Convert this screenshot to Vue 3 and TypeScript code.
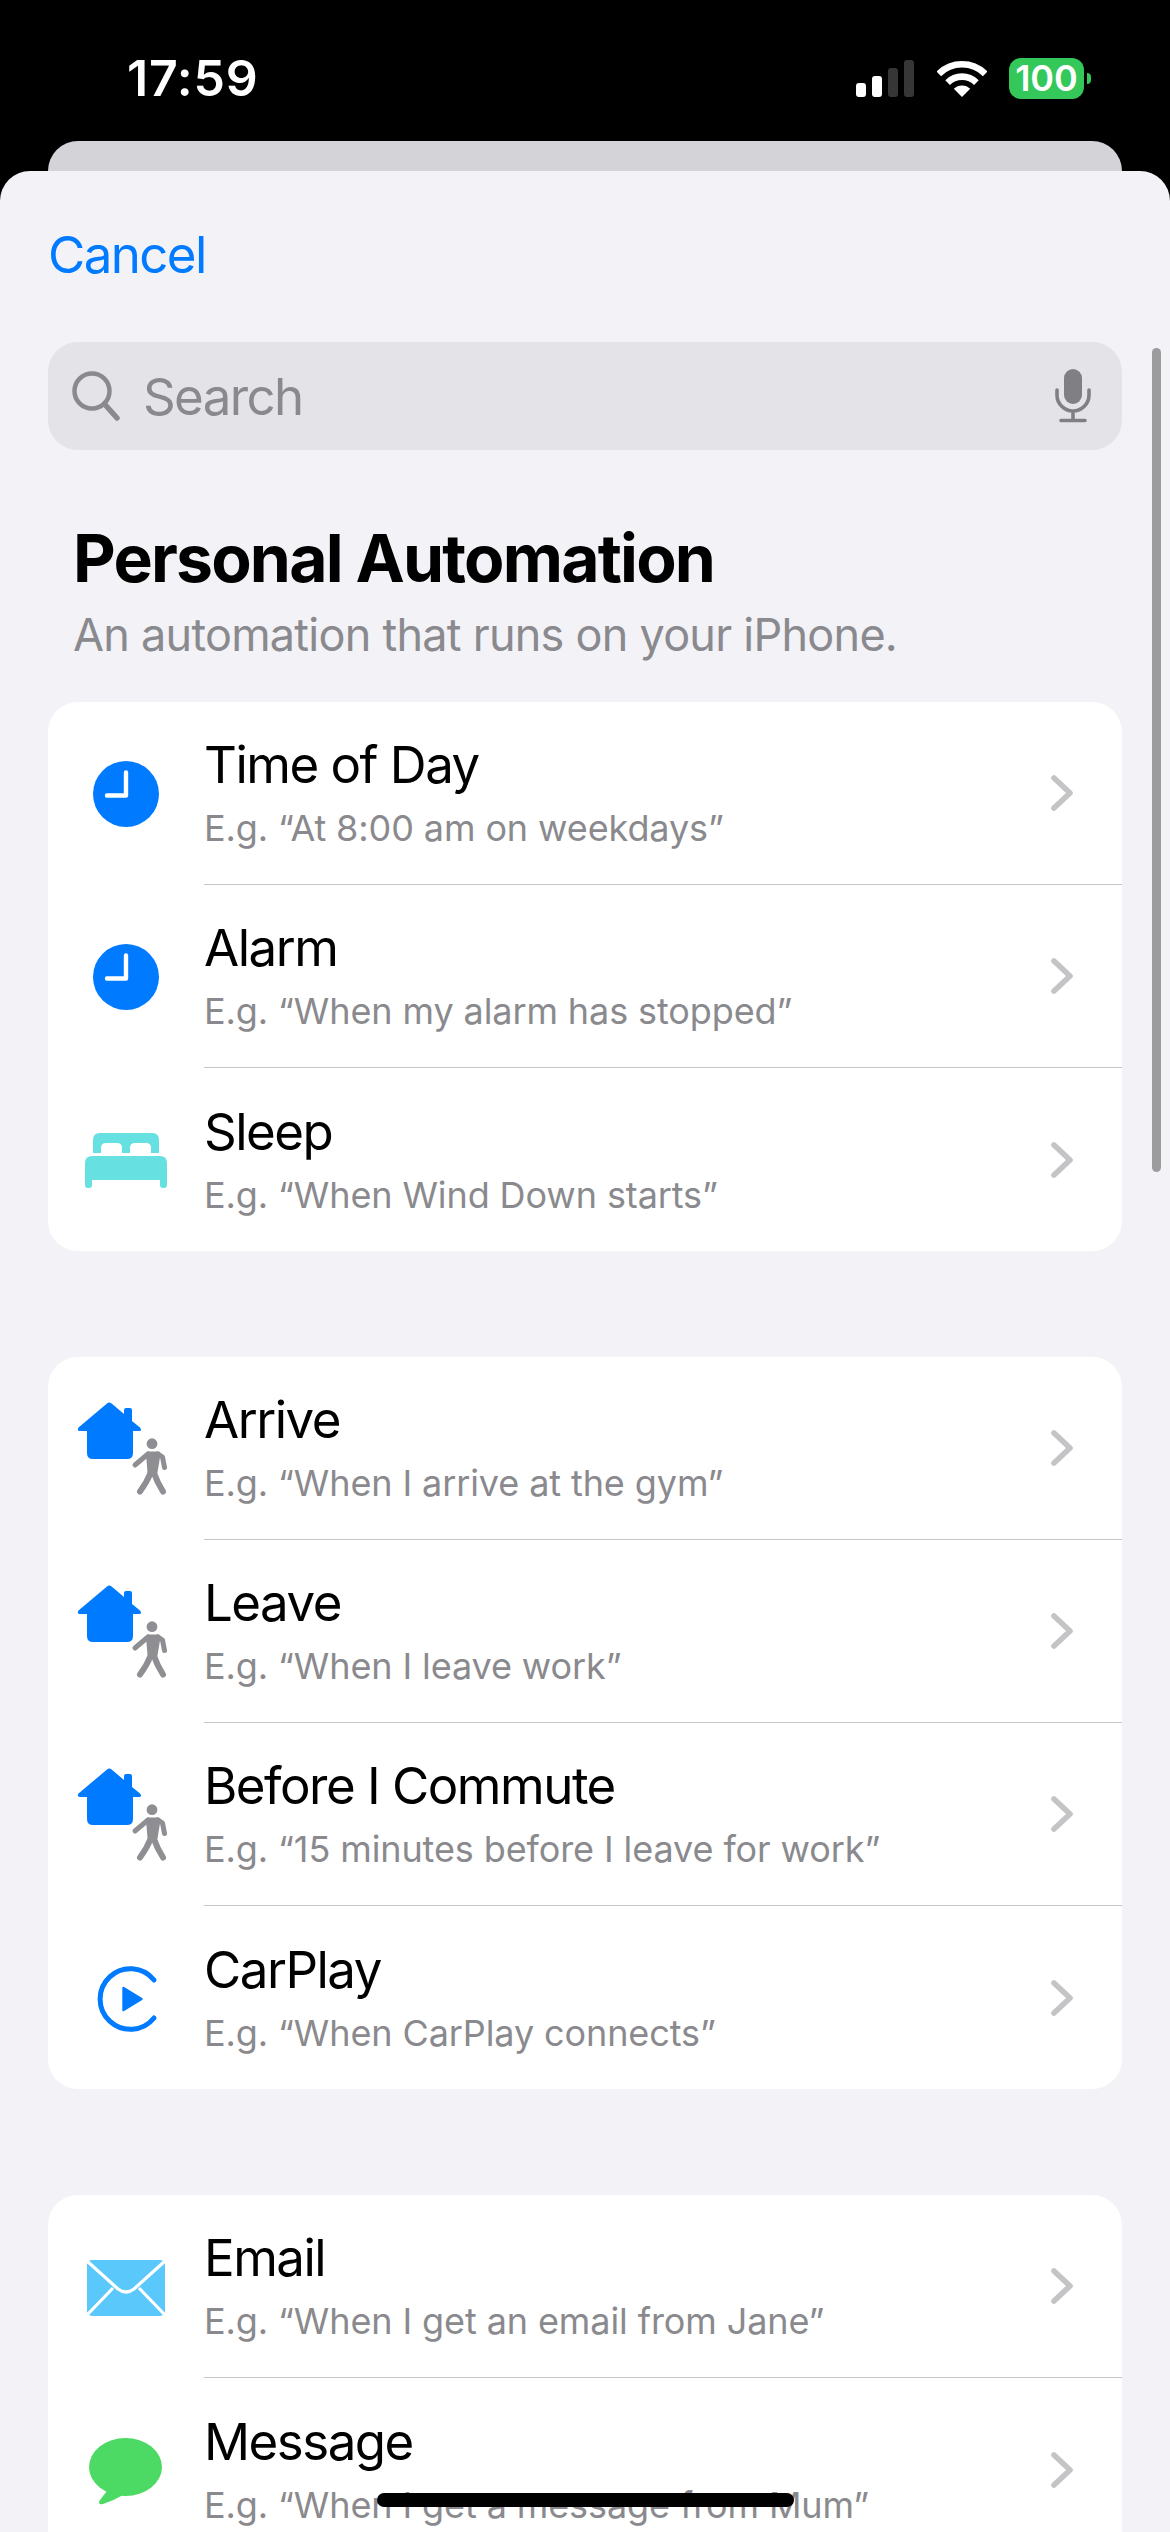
<template>
  <div class="page">
    <div class="status">
      <span class="time">17:59</span>
      <div class="status-icons">
        <svg class="signal" width="58" height="37" viewBox="0 0 58 37">
          <rect x="0" y="23" width="10" height="14" rx="3" fill="#fff" />
          <rect x="16" y="16" width="10" height="21" rx="3" fill="#fff" />
          <rect x="32" y="8" width="10" height="29" rx="3" fill="#363636" />
          <rect x="48" y="0" width="10" height="37" rx="3" fill="#363636" />
        </svg>
        <svg class="wifi" width="50" height="37" viewBox="0 0 50 37">
          <path d="M1.8 13.8A33 33 0 0 1 48.2 13.8" fill="none" stroke="#fff" stroke-width="6.6" />
          <path d="M10.6 22.6A20.4 20.4 0 0 1 39.4 22.6" fill="none" stroke="#fff" stroke-width="6.6" />
          <path d="M25 37L16.8 28.8A11.6 11.6 0 0 1 33.2 28.8Z" fill="#fff" />
        </svg>
        <div class="battery"><span>100</span></div>
        <div class="battery-nub"></div>
      </div>
    </div>
    <div class="back-card"></div>

    <div class="sheet">
      <div class="cancel">Cancel</div>

      <div class="search">
        <svg width="48" height="50" viewBox="0 0 48 50">
          <circle cx="20" cy="20" r="17.5" fill="none" stroke="#8a8a8e" stroke-width="4.5" />
          <path d="M32.5 33L45 47" fill="none" stroke="#8a8a8e" stroke-width="5.5" stroke-linecap="round" />
        </svg>
        <span class="search-text">Search</span>
        <svg class="mic" width="36" height="54" viewBox="0 0 36 54">
          <rect x="9" y="0" width="18" height="35" rx="9" fill="#7f7f84" />
          <path d="M2 21V26A16 16 0 0 0 34 26V21M18 42V51M6 51.5H30" fill="none" stroke="#7f7f84" stroke-width="3.6" stroke-linecap="round" />
        </svg>
      </div>

      <h1 class="title">Personal Automation</h1>
      <p class="subtitle">An automation that runs on your iPhone.</p>

      <div v-for="(group, g) in groups" :key="g" class="card">
        <div v-for="row in group" :key="row.title" class="row">
          <svg class="row-icon" width="156" height="182" viewBox="0 0 156 182">
            <g v-if="row.icon === 'clock'">
              <circle cx="78" cy="92" r="33" fill="#007aff" />
              <path d="M78 70.5V93.5H59" fill="none" stroke="#fff" stroke-width="4.4" stroke-linecap="round" stroke-linejoin="round" />
            </g>
            <g v-else-if="row.icon === 'bed'">
              <path fill-rule="evenodd" d="M52 65H104Q111 65 111 72V85H103V80Q103 75 98 75H87Q82 75 82 80V85H74V80Q74 75 69 75H58Q53 75 53 80V85H45V72Q45 65 52 65Z" fill="#66e0e0" />
              <path d="M44 88H112Q119 88 119 95V117Q119 120 116 120H115Q112 120 112 117V112H44V117Q44 120 41 120H40Q37 120 37 117V95Q37 88 44 88Z" fill="#66e0e0" />
            </g>
            <g v-else-if="row.icon === 'place'">
              <path d="M30.5 70.5L59 46.5Q61.3 44.6 63.6 46.5L76 57V53Q76 51 78 51H82Q84 51 84 53V64L92 70.5Q94.5 74 91 74H85V96Q85 102 79 102H45Q39 102 39 96V74H32Q28.5 74 30.5 70.5Z" fill="#007aff" />
              <g fill="none" stroke="#8e8e93" stroke-linecap="round" stroke-linejoin="round">
                <circle cx="104" cy="86.7" r="5.4" fill="#8e8e93" stroke="none" />
                <path d="M100.5 97H110L107 115H102Z" fill="#8e8e93" stroke-width="5" />
                <path d="M100 97L87 108M110 97L114.5 100L116.5 110.5" stroke-width="5" />
                <path d="M102.5 116Q99 125 92 134.5M106 116Q109 125 115 134.5" stroke-width="6" />
              </g>
            </g>
            <g v-else-if="row.icon === 'carplay'">
              <path d="M106 74A30.3 30.3 0 1 0 106 112" fill="none" stroke="#007aff" stroke-width="5" stroke-linecap="round" />
              <path d="M75.5 82L93.5 93L75.5 104Z" fill="#007aff" stroke="#007aff" stroke-width="2.4" stroke-linejoin="round" />
            </g>
            <g v-else-if="row.icon === 'mail'">
              <rect x="39" y="65" width="78" height="56" rx="5" fill="#5ac8fa" />
              <path d="M39 66L70 94Q78 100 86 94L117 66M39 120L65 93M117 120L91 93" fill="none" stroke="#fff" stroke-width="3.2" />
            </g>
            <g v-else>
              <ellipse cx="77.5" cy="89" rx="36.5" ry="29" fill="#4cd964" />
              <path d="M59 113L52 122Q49 127 55 126Q65 123 75 117Z" fill="#4cd964" />
            </g>
          </svg>
          <div class="row-body">
            <div class="row-text">
              <div class="row-title">{{ row.title }}</div>
              <div class="row-sub">{{ row.sub }}</div>
            </div>
            <svg class="chevron" width="22" height="36" viewBox="0 0 22 36">
              <path d="M3 3L19 18L3 33" fill="none" stroke="#c4c4c7" stroke-width="5.6" stroke-linecap="round" stroke-linejoin="round" />
            </svg>
          </div>
        </div>
      </div>
    </div>

    <div class="scrollbar"></div>
    <div class="home-indicator"></div>
  </div>
</template>

<script setup lang="ts">
interface Row {
  icon: string
  title: string
  sub: string
}

const groups: Row[][] = [
  [
    { icon: 'clock', title: 'Time of Day', sub: 'E.g. “At 8:00 am on weekdays”' },
    { icon: 'clock', title: 'Alarm', sub: 'E.g. “When my alarm has stopped”' },
    { icon: 'bed', title: 'Sleep', sub: 'E.g. “When Wind Down starts”' }
  ],
  [
    { icon: 'place', title: 'Arrive', sub: 'E.g. “When I arrive at the gym”' },
    { icon: 'place', title: 'Leave', sub: 'E.g. “When I leave work”' },
    { icon: 'place', title: 'Before I Commute', sub: 'E.g. “15 minutes before I leave for work”' },
    { icon: 'carplay', title: 'CarPlay', sub: 'E.g. “When CarPlay connects”' }
  ],
  [
    { icon: 'mail', title: 'Email', sub: 'E.g. “When I get an email from Jane”' },
    { icon: 'message', title: 'Message', sub: 'E.g. “When I get a message from Mum”' }
  ]
]
</script>

<style>
html,
body {
  margin: 0;
  background: #000;
}
</style>

<style scoped>
.page {
  position: relative;
  width: 1170px;
  height: 2532px;
  overflow: hidden;
  background: #000;
  font-family: Inter, "Liberation Sans", sans-serif;
}

.status {
  display: flex;
  justify-content: space-between;
  align-items: center;
  height: 141px;
  padding: 15px 79px 0 127px;
  box-sizing: border-box;
}

.time {
  font-size: 50px;
  font-weight: 600;
  letter-spacing: 0.8px;
  color: #fff;
}

.status-icons {
  display: flex;
  align-items: center;
}

.wifi {
  margin-left: 23px;
}

.battery {
  display: flex;
  align-items: center;
  justify-content: center;
  width: 75px;
  height: 41px;
  margin-left: 22px;
  border-radius: 12px;
  background: #34c759;
  color: #fff;
  font-size: 36px;
  font-weight: 600;
}

.battery-nub {
  width: 4px;
  height: 11px;
  margin-left: 3px;
  border-radius: 0 4px 4px 0;
  background: #34c759;
}

.back-card {
  height: 30px;
  margin: 0 48px;
  border-radius: 30px 30px 0 0;
  background: #d4d3d8;
}

.sheet {
  height: 2361px;
  padding: 0 48px;
  box-sizing: border-box;
  border-radius: 30px 30px 0 0;
  background: #f2f2f7;
}

.cancel {
  padding-top: 54px;
  font-size: 51px;
  line-height: 60px;
  letter-spacing: -1.6px;
  color: #007aff;
}

.search {
  display: flex;
  align-items: center;
  height: 108px;
  margin-top: 57px;
  padding: 0 31px 0 24px;
  box-sizing: border-box;
  border-radius: 30px;
  background: #e3e3e8;
}

.search-text {
  margin-left: 23px;
  font-size: 51px;
  letter-spacing: -1.6px;
  color: #8a8a8e;
}

.mic {
  margin-left: auto;
}

.title {
  margin: 68px 0 0 25px;
  font-size: 66px;
  line-height: 80px;
  font-weight: 700;
  letter-spacing: -1.8px;
  color: #000;
}

.subtitle {
  margin: 5px 0 35px 25px;
  font-size: 45px;
  line-height: 64px;
  letter-spacing: -0.75px;
  color: #8a8a8e;
}

.card {
  margin-bottom: 106px;
  border-radius: 30px;
  background: #fff;
  overflow: hidden;
}

.row {
  display: flex;
  height: 183px;
}

.row-icon {
  flex: none;
}

.row-body {
  flex: 1;
  display: flex;
  align-items: center;
  justify-content: space-between;
  padding-right: 49px;
  border-bottom: 1.5px solid #c6c6c8;
}

.row:last-child .row-body {
  border-bottom: none;
}

.row-title {
  font-size: 51px;
  line-height: 60px;
  letter-spacing: -1.5px;
  color: #000;
}

.row-sub {
  margin-top: 10px;
  font-size: 36px;
  line-height: 46px;
  letter-spacing: -0.1px;
  color: #8a8a8e;
}

.scrollbar {
  position: absolute;
  left: 1152px;
  top: 348px;
  width: 9px;
  height: 824px;
  border-radius: 5px;
  background: #9c9c9e;
}

.home-indicator {
  position: absolute;
  left: 377px;
  top: 2493px;
  width: 417px;
  height: 14px;
  border-radius: 7px;
  background: #000;
}
</style>
